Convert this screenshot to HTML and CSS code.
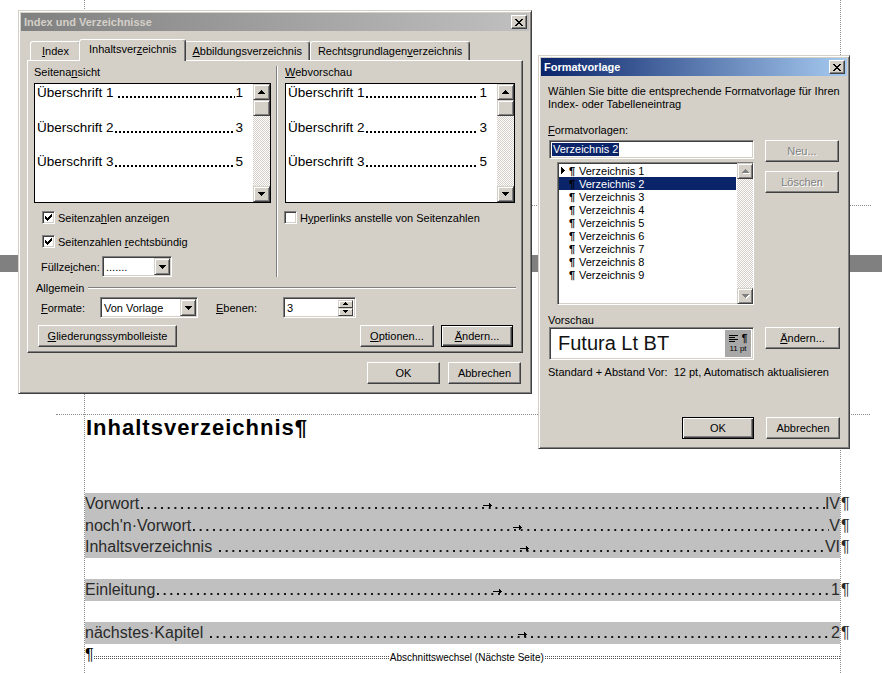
FILE: index.html
```html
<!DOCTYPE html>
<html>
<head>
    <title>Inhaltsverzeichnis</title>
    <link rel="stylesheet" href="styles.css">
</head>
<body>
<div class="screen">

    <!-- Word document behind the dialogs -->
    <div class="doc">
        <div class="sheet sheet-top">
            <div class="text-area"></div>
            <div class="edge-line"></div>
        </div>
        <div class="page-gap"></div>
        <div class="sheet sheet-bottom">
            <div class="text-area">
                <div class="top-space"></div>
                <div class="edge-line"></div>
                <h1 class="toc-title">Inhaltsverzeichnis¶</h1>

                <div class="toc-row">
                    <div class="toc-fill">
                        <span class="toc-label">Vorwort</span><span class="leader"></span><span class="toc-num">IV</span>
                        <svg class="tab-mark" style="left: 398px" width="10" height="5" viewBox="0 0 10 5"><path d="M0 2h8v1h-8z M6 0h1v1h1v1h1v1h-1v1h-1v1h-1z"/></svg>
                    </div>
                    <span class="pil">¶</span>
                </div>
                <div class="toc-row">
                    <div class="toc-fill">
                        <span class="toc-label">noch'n·Vorwort</span><span class="leader"></span><span class="toc-num">V</span>
                        <svg class="tab-mark" style="left: 428px" width="10" height="5" viewBox="0 0 10 5"><path d="M0 2h8v1h-8z M6 0h1v1h1v1h1v1h-1v1h-1v1h-1z"/></svg>
                    </div>
                    <span class="pil">¶</span>
                </div>
                <div class="toc-row">
                    <div class="toc-fill">
                        <span class="toc-label">Inhaltsverzeichnis </span><span class="leader"></span><span class="toc-num">VI</span>
                        <svg class="tab-mark" style="left: 435px" width="10" height="5" viewBox="0 0 10 5"><path d="M0 2h8v1h-8z M6 0h1v1h1v1h1v1h-1v1h-1v1h-1z"/></svg>
                    </div>
                    <span class="pil">¶</span>
                </div>
                <div class="toc-row spaced">
                    <div class="toc-fill">
                        <span class="toc-label">Einleitung</span><span class="leader"></span><span class="toc-num">1</span>
                        <svg class="tab-mark" style="left: 408px" width="10" height="5" viewBox="0 0 10 5"><path d="M0 2h8v1h-8z M6 0h1v1h1v1h1v1h-1v1h-1v1h-1z"/></svg>
                    </div>
                    <span class="pil">¶</span>
                </div>
                <div class="toc-row spaced">
                    <div class="toc-fill">
                        <span class="toc-label">nächstes·Kapitel </span><span class="leader"></span><span class="toc-num">2</span>
                        <svg class="tab-mark" style="left: 433px" width="10" height="5" viewBox="0 0 10 5"><path d="M0 2h8v1h-8z M6 0h1v1h1v1h1v1h-1v1h-1v1h-1z"/></svg>
                    </div>
                    <span class="pil">¶</span>
                </div>

                <div class="sec-break">
                    <span class="sec-pil">¶</span>
                    <div class="brk">
                        <span class="brk-line"></span>
                        <span class="brk-text">Abschnittswechsel (Nächste Seite)</span>
                        <span class="brk-line"></span>
                    </div>
                </div>
            </div>
        </div>
    </div>

    <!-- Index und Verzeichnisse -->
    <div class="dialog dlg-index">
        <div class="titlebar inactive">
            <span>Index und Verzeichnisse</span>
            <span class="close-btn"><svg width="8" height="7" viewBox="0 0 8 7"><path d="M0 0h2v1h-2z M6 0h2v1h-2z M1 1h2v1h-2z M5 1h2v1h-2z M2 2h4v1h-4z M3 3h2v1h-2z M2 4h4v1h-4z M1 5h2v1h-2z M5 5h2v1h-2z M0 6h2v1h-2z M6 6h2v1h-2z"/></svg></span>
        </div>
        <div class="idx-body">
            <div class="tabs">
                <span class="tab"><u>I</u>ndex</span>
                <span class="tab active">Inhaltsver<u>z</u>eichnis</span>
                <span class="tab"><u>A</u>bbildungsverzeichnis</span>
                <span class="tab">Rechtsgrundlagen<u>v</u>erzeichnis</span>
            </div>
            <div class="panel">
                <div class="cols">
                    <div class="col col-left">
                        <div class="lbl">Seitena<u>n</u>sicht</div>
                        <div class="pv-box">
                            <div class="pv-list">
                                <div class="pv-item"><span>Überschrift 1 </span><span class="dots"></span><span>1</span></div>
                                <div class="pv-item"><span>Überschrift 2</span><span class="dots"></span><span>3</span></div>
                                <div class="pv-item"><span>Überschrift 3</span><span class="dots"></span><span>5</span></div>
                            </div>
                            <div class="vscroll">
                                <span class="sb-btn"><svg width="7" height="4" viewBox="0 0 7 4"><path d="M3 0h1v1h1v1h1v1h1v1h-7v-1h1v-1h1v-1h1z"/></svg></span>
                                <span class="sb-btn"></span>
                                <span class="sb-track"></span>
                                <span class="sb-btn"><svg width="7" height="4" viewBox="0 0 7 4"><path d="M0 0h7v1h-1v1h-1v1h-1v1h-1v-1h-1v-1h-1v-1h-1z"/></svg></span>
                            </div>
                        </div>
                        <div class="check-row">
                            <span class="checkbox"><svg width="7" height="7" viewBox="0 0 7 7"><path d="M6 0h1v1h-1z M5 1h2v1h-2z M0 2h1v1h-1z M4 2h3v1h-3z M0 3h2v1h-2z M3 3h3v1h-3z M0 4h5v1h-5z M1 5h3v1h-3z M2 6h1v1h-1z"/></svg></span>
                            <span>Seitenza<u>h</u>len anzeigen</span>
                        </div>
                        <div class="check-row">
                            <span class="checkbox"><svg width="7" height="7" viewBox="0 0 7 7"><path d="M6 0h1v1h-1z M5 1h2v1h-2z M0 2h1v1h-1z M4 2h3v1h-3z M0 3h2v1h-2z M3 3h3v1h-3z M0 4h5v1h-5z M1 5h3v1h-3z M2 6h1v1h-1z"/></svg></span>
                            <span>Seitenzahlen <u>r</u>echtsbündig</span>
                        </div>
                        <div class="fill-row">
                            <span class="fill-lbl">Füllze<u>i</u>chen:</span>
                            <div class="field combo fill-combo">
                                <span class="combo-text">.......</span>
                                <span class="dd-btn"><svg width="7" height="4" viewBox="0 0 7 4"><path d="M0 0h7v1h-1v1h-1v1h-1v1h-1v-1h-1v-1h-1v-1h-1z"/></svg></span>
                            </div>
                        </div>
                    </div>
                    <div class="col col-right">
                        <div class="lbl"><u>W</u>ebvorschau</div>
                        <div class="pv-box web">
                            <div class="pv-list">
                                <div class="pv-item"><span>Überschrift 1</span><span class="dots"></span><span> 1</span></div>
                                <div class="pv-item"><span>Überschrift 2</span><span class="dots"></span><span> 3</span></div>
                                <div class="pv-item"><span>Überschrift 3</span><span class="dots"></span><span> 5</span></div>
                            </div>
                            <div class="vscroll">
                                <span class="sb-btn"><svg width="7" height="4" viewBox="0 0 7 4"><path d="M3 0h1v1h1v1h1v1h1v1h-7v-1h1v-1h1v-1h1z"/></svg></span>
                                <span class="sb-btn"></span>
                                <span class="sb-track"></span>
                                <span class="sb-btn"><svg width="7" height="4" viewBox="0 0 7 4"><path d="M0 0h7v1h-1v1h-1v1h-1v1h-1v-1h-1v-1h-1v-1h-1z"/></svg></span>
                            </div>
                        </div>
                        <div class="check-row web-check">
                            <span class="checkbox"></span>
                            <span>H<u>y</u>perlinks anstelle von Seitenzahlen</span>
                        </div>
                    </div>
                </div>

                <div class="group-head">
                    <span>Allgemein</span>
                    <span class="etch"></span>
                </div>
                <div class="format-row">
                    <span class="fmt-lbl"><u>F</u>ormate:</span>
                    <div class="field combo fmt-combo">
                        <span class="combo-text">Von Vorlage</span>
                        <span class="dd-btn"><svg width="7" height="4" viewBox="0 0 7 4"><path d="M0 0h7v1h-1v1h-1v1h-1v1h-1v-1h-1v-1h-1v-1h-1z"/></svg></span>
                    </div>
                    <span class="lvl-lbl"><u>E</u>benen:</span>
                    <div class="field spin">
                        <span class="combo-text">3</span>
                        <span class="spin-btns">
                            <span class="spin-btn"><svg width="5" height="3" viewBox="0 0 5 3"><path d="M2 0h1v1h1v1h1v1h-5v-1h1v-1h1z"/></svg></span>
                            <span class="spin-btn"><svg width="5" height="3" viewBox="0 0 5 3"><path d="M0 0h5v1h-1v1h-1v1h-1v-1h-1v-1h-1z"/></svg></span>
                        </span>
                    </div>
                </div>
                <div class="panel-btns">
                    <span class="btn btn-outline"><u>G</u>liederungssymbolleiste</span>
                    <span class="btn btn-options"><u>O</u>ptionen...</span>
                    <span class="btn default btn-change"><u>Ä</u>ndern...</span>
                </div>
            </div>
            <div class="dlg-btns">
                <span class="btn btn-ok">OK</span>
                <span class="btn btn-cancel">Abbrechen</span>
            </div>
        </div>
    </div>

    <!-- Formatvorlage -->
    <div class="dialog dlg-format">
        <div class="titlebar active">
            <span>Formatvorlage</span>
            <span class="close-btn"><svg width="8" height="7" viewBox="0 0 8 7"><path d="M0 0h2v1h-2z M6 0h2v1h-2z M1 1h2v1h-2z M5 1h2v1h-2z M2 2h4v1h-4z M3 3h2v1h-2z M2 4h4v1h-4z M1 5h2v1h-2z M5 5h2v1h-2z M0 6h2v1h-2z M6 6h2v1h-2z"/></svg></span>
        </div>
        <div class="fmt-body">
            <p class="hint">Wählen Sie bitte die entsprechende Formatvorlage für Ihren<br>Index- oder Tabelleneintrag</p>
            <div class="fmt-grid">
                <div class="fmt-left">
                    <div class="lbl"><u>F</u>ormatvorlagen:</div>
                    <div class="field sel-field"><span class="sel-text">Verzeichnis 2</span></div>
                    <div class="field style-list">
                        <div class="sl-items">
                            <div class="sl-item"><span class="sl-mark"><svg width="4" height="7" viewBox="0 0 4 7"><path d="M0 0h1v1h1v1h1v1h1v1h-1v1h-1v1h-1v1h-1z"/></svg></span><span class="sl-pil">¶</span>Verzeichnis 1</div>
                            <div class="sl-item selected"><span class="sl-mark"></span><span class="sl-pil">¶</span>Verzeichnis 2</div>
                            <div class="sl-item"><span class="sl-mark"></span><span class="sl-pil">¶</span>Verzeichnis 3</div>
                            <div class="sl-item"><span class="sl-mark"></span><span class="sl-pil">¶</span>Verzeichnis 4</div>
                            <div class="sl-item"><span class="sl-mark"></span><span class="sl-pil">¶</span>Verzeichnis 5</div>
                            <div class="sl-item"><span class="sl-mark"></span><span class="sl-pil">¶</span>Verzeichnis 6</div>
                            <div class="sl-item"><span class="sl-mark"></span><span class="sl-pil">¶</span>Verzeichnis 7</div>
                            <div class="sl-item"><span class="sl-mark"></span><span class="sl-pil">¶</span>Verzeichnis 8</div>
                            <div class="sl-item"><span class="sl-mark"></span><span class="sl-pil">¶</span>Verzeichnis 9</div>
                        </div>
                        <div class="vscroll slim">
                            <span class="sb-btn off"><svg width="7" height="4" viewBox="0 0 7 4"><path d="M3 0h1v1h1v1h1v1h1v1h-7v-1h1v-1h1v-1h1z"/></svg></span>
                            <span class="sb-track"></span>
                            <span class="sb-btn off"><svg width="7" height="4" viewBox="0 0 7 4"><path d="M0 0h7v1h-1v1h-1v1h-1v1h-1v-1h-1v-1h-1v-1h-1z"/></svg></span>
                        </div>
                    </div>
                    <div class="lbl preview-lbl">Vorschau</div>
                    <div class="field fmt-preview">
                        <span class="fp-text">Futura Lt BT</span>
                        <span class="fp-side">
                            <span class="fp-icons">
                                <svg width="9" height="7" viewBox="0 0 9 7"><path d="M0 0h9v1h-9z M0 2h6v1h-6z M0 4h9v1h-9z M0 6h6v1h-6z"/></svg>
                                <b>¶</b>
                            </span>
                            <span class="fp-size">11 pt</span>
                        </span>
                    </div>
                </div>
                <div class="fmt-right">
                    <span class="btn disabled btn-new">Neu...</span>
                    <span class="btn disabled btn-del">Löschen</span>
                    <span class="btn btn-edit"><u>Ä</u>ndern...</span>
                </div>
            </div>
            <p class="desc">Standard + Abstand Vor:&nbsp; 12 pt, Automatisch aktualisieren</p>
            <div class="fmt-btns">
                <span class="btn default btn-ok2">OK</span>
                <span class="btn btn-cancel2">Abbrechen</span>
            </div>
        </div>
    </div>

</div>
</body>
</html>
```

FILE: styles.css
```css
* {
    box-sizing: border-box;
}
html, body {
    margin: 0;
    padding: 0;
}
body {
    width: 882px;
    height: 673px;
    overflow: hidden;
    background: #fff;
    font-family: "Liberation Sans", Arial, sans-serif;
    font-size: 11px;
    color: #000;
}
u {
    text-decoration: underline;
    text-underline-offset: 1px;
}
svg {
    display: block;
    shape-rendering: crispEdges;
}
.screen {
    position: relative;
    width: 882px;
    height: 673px;
    overflow: hidden;
}

/* ---------- Word page ---------- */
.doc {
    display: flex;
    flex-direction: column;
    height: 673px;
}
.sheet {
    padding: 0 41px 0 84px;
}
.sheet-top {
    height: 255px;
}
.sheet-top .text-area {
    height: 205px;
}
.sheet-bottom {
    flex: 1;
}
.sheet-bottom .text-area {
    height: 100%;
}
.text-area {
    border-left: 1px dotted #8c8c8c;
    border-right: 1px dotted #8c8c8c;
}
.edge-line {
    height: 0;
    border-top: 1px dotted #8c8c8c;
    margin: 0 -30px 0 -29px;
}
.page-gap {
    height: 17px;
    background: #808080;
}
.top-space {
    height: 142px;
}
.toc-title {
    margin: 0 0 52px 1px;
    font-size: 22px;
    line-height: 26px;
    font-weight: bold;
    letter-spacing: 1px;
}
.toc-row {
    display: flex;
    height: 21.5px;
    margin-right: -12px;
    font-size: 16px;
    line-height: 21.5px;
    color: #2a2a2a;
}
.toc-row.spaced {
    margin-top: 21.5px;
}
.toc-fill {
    position: relative;
    flex: 1;
    display: flex;
    background: #c0c0c0;
}
.toc-label {
    white-space: pre;
}
.leader {
    flex: 1;
    background-image: linear-gradient(90deg, #111 2px, transparent 2px);
    background-size: 6.7px 2px;
    background-repeat: repeat-x;
    background-position: 2px 14px;
}
.tab-mark {
    position: absolute;
    top: 10px;
}
.pil {
    width: 12px;
    padding-left: 1px;
}
.sec-break {
    display: flex;
    height: 18px;
    margin-top: 2px;
    font-size: 16px;
    line-height: 18px;
}
.brk {
    flex: 1;
    display: flex;
    align-items: center;
    align-self: flex-end;
    height: 10px;
    margin-bottom: 1px;
}
.brk-line {
    flex: 1;
    height: 3px;
    border-top: 1px dotted #555;
    border-bottom: 1px dotted #555;
}
.brk-text {
    font-size: 10px;
    line-height: 10px;
    padding: 0 1px;
}

/* ---------- classic dialog parts ---------- */
.dialog {
    position: absolute;
    background: #d4d0c8;
    border: 1px solid;
    border-color: #d4d0c8 #404040 #404040 #d4d0c8;
    box-shadow: inset 1px 1px #fff, inset -1px -1px #808080;
    padding: 2px;
}
.dlg-index {
    left: 18px;
    top: 10px;
    width: 514px;
    height: 384px;
}
.dlg-format {
    left: 538px;
    top: 55px;
    width: 312px;
    height: 394px;
}
.titlebar {
    display: flex;
    align-items: center;
    justify-content: space-between;
    height: 18px;
    padding: 0 2px 0 3px;
    font-weight: bold;
}
.titlebar.inactive {
    background: linear-gradient(90deg, #808080, #c0c0c0);
    color: #d4d0c8;
}
.titlebar.active {
    background: linear-gradient(90deg, #0a246a, #a6caf0);
    color: #fff;
}
.close-btn {
    display: flex;
    align-items: center;
    justify-content: center;
    width: 16px;
    height: 14px;
    background: #d4d0c8;
    border: 1px solid;
    border-color: #fff #404040 #404040 #fff;
    box-shadow: inset -1px -1px #808080;
}
.btn {
    display: flex;
    align-items: center;
    justify-content: center;
    height: 22px;
    background: #d4d0c8;
    border: 1px solid;
    border-color: #fff #404040 #404040 #fff;
    box-shadow: inset -1px -1px #808080;
}
.btn.default {
    border-color: #000;
    box-shadow: inset 1px 1px #fff, inset -1px -1px #404040, inset -2px -2px #808080;
}
.btn.disabled {
    color: #808080;
    text-shadow: 1px 1px #fff;
}
.field {
    background: #fff;
    border: 1px solid;
    border-color: #808080 #fff #fff #808080;
    box-shadow: inset 1px 1px #404040, inset -1px -1px #d4d0c8;
}
.lbl {
    height: 13px;
    line-height: 13px;
}
.combo, .spin {
    display: flex;
    align-items: center;
    height: 21px;
}
.combo-text {
    flex: 1;
    padding-left: 3px;
    white-space: nowrap;
}
.dd-btn {
    display: flex;
    align-items: center;
    justify-content: center;
    width: 16px;
    height: 17px;
    margin-right: 1px;
    background: #d4d0c8;
    border: 1px solid;
    border-color: #d4d0c8 #404040 #404040 #d4d0c8;
    box-shadow: inset 1px 1px #fff, inset -1px -1px #808080;
}
.vscroll {
    display: flex;
    flex-direction: column;
    width: 17px;
    background-color: #fff;
    background-image: repeating-conic-gradient(#d4d0c8 0 25%, #fff 0 50%);
    background-size: 2px 2px;
}
.vscroll.slim {
    width: 16px;
}
.sb-btn {
    display: flex;
    align-items: center;
    justify-content: center;
    height: 16px;
    background: #d4d0c8;
    border: 1px solid;
    border-color: #d4d0c8 #404040 #404040 #d4d0c8;
    box-shadow: inset 1px 1px #fff, inset -1px -1px #808080;
}
.sb-btn.off svg {
    fill: #808080;
    filter: drop-shadow(1px 1px 0 #fff);
}
.sb-track {
    flex: 1;
}
.checkbox {
    display: flex;
    align-items: center;
    justify-content: center;
    width: 13px;
    height: 13px;
    background: #fff;
    border: 1px solid;
    border-color: #808080 #fff #fff #808080;
    box-shadow: inset 1px 1px #404040, inset -1px -1px #d4d0c8;
}

/* ---------- Index und Verzeichnisse ---------- */
.idx-body {
    padding: 8px 6px 0 6px;
}
.tabs {
    display: flex;
    align-items: flex-end;
    height: 21px;
    padding-left: 3px;
}
.tab {
    height: 19px;
    min-width: 51px;
    padding: 0 7px;
    text-align: center;
    line-height: 18px;
    white-space: nowrap;
    border: 1px solid;
    border-bottom: 0;
    border-color: #fff #404040 #404040 #fff;
    box-shadow: inset -1px 0 #808080;
    border-radius: 3px 3px 0 0;
}
.tab.active {
    position: relative;
    z-index: 1;
    height: 22px;
    margin: 0 -2px -1px;
    padding: 0 9px;
    background: #d4d0c8;
    line-height: 19px;
}
.panel {
    height: 293px;
    border: 1px solid;
    border-color: #fff #404040 #404040 #fff;
    box-shadow: inset -1px -1px #808080;
}
.cols {
    display: grid;
    grid-template-columns: 248px 1fr;
    height: 210px;
    margin-top: 5px;
}
.col-left {
    padding-left: 6px;
}
.col-right {
    padding-left: 8px;
    border-left: 1px solid #808080;
    box-shadow: inset 1px 0 #fff;
}
.pv-box {
    display: flex;
    width: 237px;
    height: 120px;
    margin-top: 4px;
    background: #fff;
    border: 1px solid #000;
}
.pv-box.web {
    width: 230px;
}
.pv-list {
    flex: 1;
    min-width: 0;
    padding: 0 10px 0 2px;
    font-size: 13.5px;
}
.pv-item {
    display: flex;
    height: 18px;
    line-height: 18px;
    margin-bottom: 16.5px;
    white-space: pre;
}
.pv-item .dots {
    flex: 1;
    background-image: linear-gradient(90deg, #000 2px, transparent 2px);
    background-size: 4px 2px;
    background-repeat: repeat-x;
    background-position: 1px 12px;
}
.check-row {
    display: flex;
    align-items: center;
    gap: 3px;
    height: 13px;
    margin: 8px 0 0 8px;
    white-space: nowrap;
}
.check-row + .check-row {
    margin-top: 11px;
}
.web-check {
    margin-left: -1px;
}
.fill-row {
    display: flex;
    align-items: center;
    margin: 8px 0 0 7px;
}
.fill-lbl {
    width: 61px;
}
.fill-combo {
    width: 70px;
}
.group-head {
    display: flex;
    align-items: center;
    gap: 4px;
    height: 14px;
    margin: 5px 6px 0 8px;
}
.etch {
    flex: 1;
    height: 2px;
    border-top: 1px solid #808080;
    border-bottom: 1px solid #fff;
}
.format-row {
    display: flex;
    align-items: center;
    height: 21px;
    margin: 2px 0 0 13px;
}
.fmt-lbl {
    width: 59px;
}
.fmt-combo {
    width: 98px;
}
.lvl-lbl {
    width: 67px;
    margin-left: 18px;
}
.spin {
    width: 73px;
}
.spin-btns {
    display: flex;
    flex-direction: column;
    margin-right: 2px;
}
.spin-btn {
    display: flex;
    align-items: center;
    justify-content: center;
    width: 15px;
    height: 8px;
    background: #d4d0c8;
    border: 1px solid;
    border-color: #d4d0c8 #404040 #404040 #d4d0c8;
    box-shadow: inset 1px 1px #fff;
}
.panel-btns {
    display: flex;
    gap: 7px;
    margin: 7px 9px 0 10px;
}
.btn-outline {
    width: 139px;
}
.btn-options {
    width: 74px;
    margin-left: auto;
}
.btn-change {
    width: 72px;
}
.dlg-btns {
    display: flex;
    justify-content: flex-end;
    gap: 8px;
    margin-top: 9px;
    padding-right: 2px;
}
.dlg-btns .btn {
    width: 73px;
}

/* ---------- Formatvorlage ---------- */
.fmt-body {
    padding: 9px 7px 0 7px;
}
.hint, .desc {
    margin: 0;
    line-height: 13px;
    white-space: nowrap;
}
.fmt-grid {
    display: grid;
    grid-template-columns: 206px 75px;
    column-gap: 11px;
    margin-top: 13px;
}
.sel-field {
    display: flex;
    align-items: center;
    width: 205px;
    height: 19px;
    margin: 3px 0 0 1px;
    padding-left: 2px;
}
.sel-text {
    padding: 0 1px;
    line-height: 13px;
    background: #0a246a;
    color: #fff;
}
.style-list {
    display: flex;
    width: 197px;
    height: 143px;
    margin: 3px 0 0 9px;
}
.sl-items {
    flex: 1;
    padding: 1px 1px 0 1px;
}
.sl-item {
    display: flex;
    align-items: center;
    height: 13px;
    white-space: nowrap;
}
.sl-item.selected {
    background: #0a246a;
    color: #fff;
}
.sl-mark {
    display: flex;
    align-items: center;
    width: 10px;
    padding-left: 2px;
}
.sl-pil {
    width: 10px;
    font-weight: bold;
    color: #000;
}
.preview-lbl {
    margin-top: 9px;
}
.fmt-preview {
    display: flex;
    width: 205px;
    height: 33px;
    margin-left: 1px;
}
.fp-text {
    flex: 1;
    padding-left: 8px;
    font-size: 20px;
    line-height: 31px;
    color: #111;
}
.fp-side {
    display: flex;
    flex-direction: column;
    align-items: center;
    justify-content: center;
    gap: 2px;
    width: 26px;
    margin: 2px 2px 2px 0;
    background: #a8a8a8;
    font-size: 8px;
}
.fp-icons {
    display: flex;
    align-items: center;
    gap: 4px;
    font-size: 10px;
    line-height: 9px;
}
.fp-size {
    line-height: 8px;
}
.fmt-right {
    display: flex;
    flex-direction: column;
}
.btn-new {
    width: 74px;
    margin-top: 16px;
}
.btn-del {
    width: 74px;
    margin-top: 9px;
}
.btn-edit {
    width: 75px;
    margin-top: 134px;
}
.desc {
    margin-top: 6px;
}
.fmt-btns {
    display: flex;
    justify-content: flex-end;
    gap: 12px;
    margin-top: 38px;
}
.btn-ok2 {
    width: 72px;
}
.btn-cancel2 {
    width: 74px;
}
```
